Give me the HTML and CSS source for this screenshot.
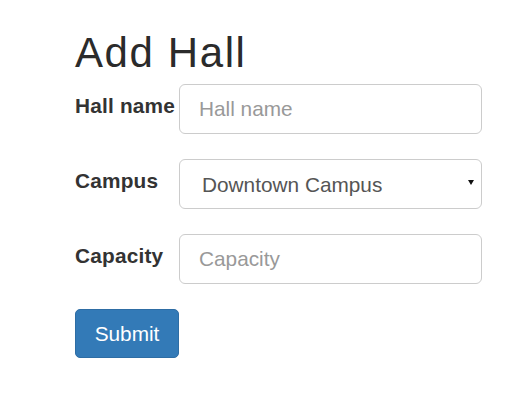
FILE: index.html
```html
<!DOCTYPE html>
<html lang="en">
<head>
<meta charset="utf-8">
<title>Add Hall</title>
<link rel="stylesheet" href="styles.css">
</head>
<body>
<div class="page">
  <h1 class="title">Add Hall</h1>
  <form class="hall-form">
    <label class="field-label" for="hall-name">Hall name</label>
    <input class="field-input" id="hall-name" type="text" placeholder="Hall name">

    <label class="field-label" for="campus">Campus</label>
    <div class="select-wrap">
      <select class="field-input field-select" id="campus">
        <option>Downtown Campus</option>
      </select>
    </div>

    <label class="field-label" for="capacity">Capacity</label>
    <input class="field-input" id="capacity" type="text" placeholder="Capacity">

    <button class="btn-submit" type="submit">Submit</button>
  </form>
</div>
</body>
</html>
```
FILE: styles.css
```css
html, body {
  margin: 0;
  padding: 0;
  background: #fff;
}

.page {
  padding-left: 75px;
  font-family: "Liberation Sans", Arial, sans-serif;
  color: #333;
}

.title {
  margin: 30px 0 8px 0;
  font-size: 42px;
  font-weight: 400;
  line-height: 1.1;
  letter-spacing: 1.6px;
  color: #2b2b2b;
}

.hall-form {
  display: grid;
  grid-template-columns: 104px 303px;
  grid-auto-rows: 50px;
  row-gap: 25px;
  align-items: start;
}

.field-label {
  padding-top: 6.5px;
  font-size: 20.8px;
  font-weight: 700;
  line-height: 1.43;
  letter-spacing: 0.2px;
  color: #333;
}

.field-input {
  box-sizing: border-box;
  width: 303px;
  height: 50px;
  margin: 0;
  padding: 0 19px;
  border: 1px solid #ccc;
  border-radius: 6px;
  background: #fff;
  font-family: "Liberation Sans", Arial, sans-serif;
  font-size: 20.8px;
  color: #555;
  outline: none;
}

.field-input::placeholder {
  color: #999;
  opacity: 1;
}

.select-wrap {
  position: relative;
  width: 303px;
  height: 50px;
}

.field-select {
  appearance: none;
  -webkit-appearance: none;
  padding-left: 22px;
  display: block;
}

.select-wrap::after {
  content: "";
  position: absolute;
  right: 8px;
  top: 21px;
  width: 0;
  height: 0;
  border-left: 3px solid transparent;
  border-right: 3px solid transparent;
  border-top: 5px solid #111;
  pointer-events: none;
}

.btn-submit {
  grid-column: 1;
  box-sizing: border-box;
  width: 104px;
  height: 49px;
  margin: 0;
  padding: 0;
  border: 1px solid #2e6da4;
  border-radius: 5px;
  background: #337ab7;
  color: #fff;
  font-family: "Liberation Sans", Arial, sans-serif;
  font-size: 20.8px;
  font-weight: 400;
  cursor: pointer;
}
```
